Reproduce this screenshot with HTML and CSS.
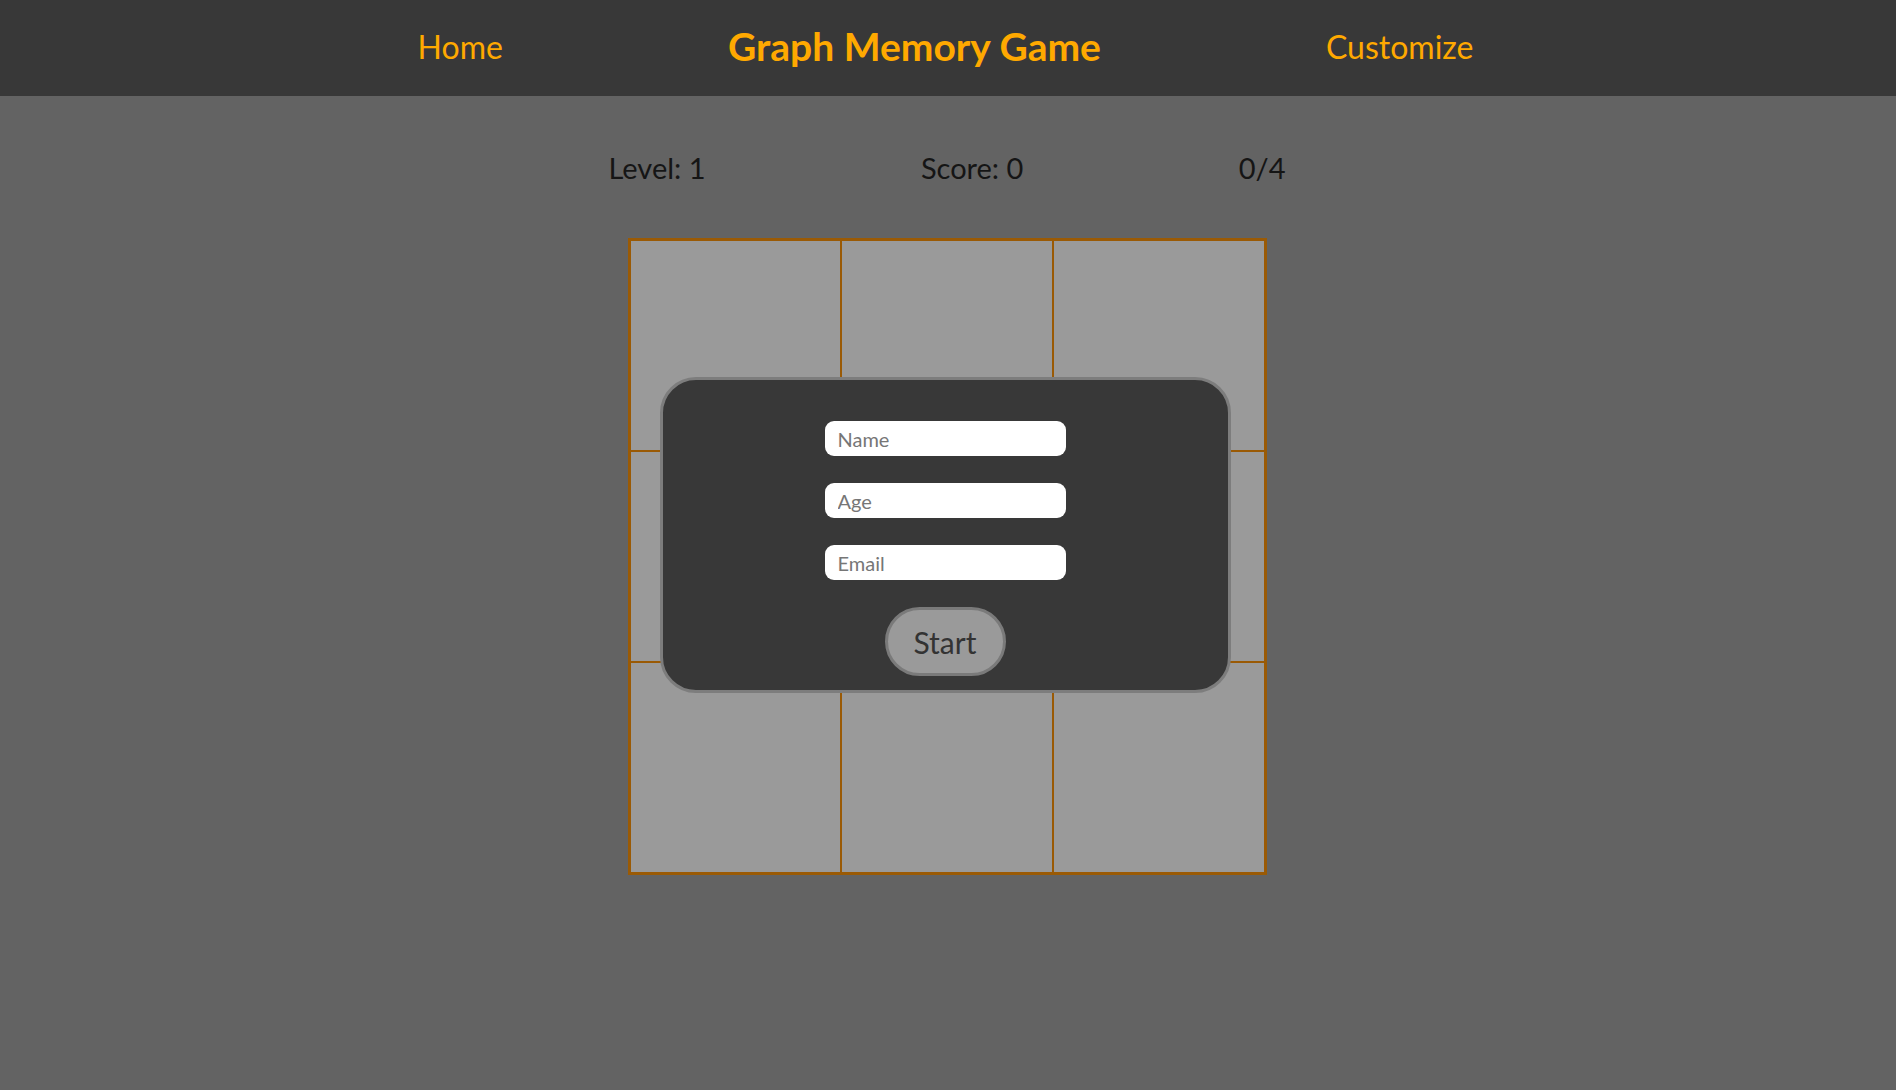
FILE: index.html
```html
<!DOCTYPE html>
<html lang="en">
<head>
<meta charset="utf-8">
<title>Graph Memory Game</title>
<link rel="stylesheet" href="styles.css">
</head>
<body>
<header class="topbar">
  <a class="nav-link" href="#">Home</a>
  <h1 class="title">Graph Memory Game</h1>
  <a class="nav-link" href="#">Customize</a>
</header>
<main class="main">
  <div class="stats">
    <span class="stat">Level: 1</span>
    <span class="stat">Score: 0</span>
    <span class="stat">0/4</span>
  </div>
  <div class="board-wrap">
    <div class="board">
      <div class="cell"></div><div class="cell"></div><div class="cell"></div>
      <div class="cell"></div><div class="cell"></div><div class="cell"></div>
      <div class="cell"></div><div class="cell"></div><div class="cell"></div>
    </div>
    <form class="modal">
      <input class="field" type="text" placeholder="Name">
      <input class="field" type="text" placeholder="Age">
      <input class="field" type="text" placeholder="Email">
      <button class="start" type="button">Start</button>
    </form>
  </div>
</main>
</body>
</html>
```
FILE: styles.css
```css
* { box-sizing: border-box; }
html, body { margin: 0; padding: 0; }
body {
  background: #636363;
  font-family: Lato, "Open Sans", sans-serif;
  height: 1087px;
  overflow: hidden;
}
.topbar {
  height: 96px;
  background: #383838;
  display: flex;
  justify-content: center;
  align-items: center;
  gap: 225px;
  padding-bottom: 4px;
  padding-right: 5px;
}
.nav-link {
  color: #ffa900;
  text-decoration: none;
  font-size: 32px;
}
.title {
  margin: 0;
  color: #ffa900;
  font-size: 39px;
  font-weight: 700;
}
.main {
  display: flex;
  flex-direction: column;
  align-items: center;
  padding-top: 52px;
}
.stats {
  width: 677px;
  display: flex;
  justify-content: space-between;
  color: #151515;
  font-size: 29px;
  line-height: 40px;
  margin-right: 2px;
}
.board-wrap {
  position: relative;
  margin-top: 50px;
  margin-right: 2px;
}
.board {
  width: 639px;
  height: 637px;
  border: 2px solid #9a5a05;
  display: grid;
  grid-template-columns: repeat(3, 1fr);
  grid-template-rows: repeat(3, 1fr);
  background: #9a9a9a;
}
.cell {
  border: 1px solid #9a5a05;
  background: #9a9a9a;
}
.modal {
  position: absolute;
  left: 32px;
  top: 139px;
  width: 571px;
  height: 316px;
  background: #383838;
  border: 3px solid #7d7d7d;
  border-radius: 36px;
  display: flex;
  flex-direction: column;
  align-items: center;
  padding-top: 41px;
  gap: 27px;
  margin: 0;
}
.field {
  width: 241px;
  height: 35px;
  border: none;
  border-radius: 9px;
  background: #fff;
  padding: 0 13px;
  font-family: Lato, "Open Sans", sans-serif;
  font-size: 20px;
  color: #333;
  outline: none;
}
.field::placeholder { color: #767676; }
.start {
  width: 121px;
  height: 69px;
  border: 3px solid #7a7a7a;
  border-radius: 35px;
  background: #9a9a9a;
  color: #333;
  font-family: Lato, "Open Sans", sans-serif;
  font-size: 30px;
  padding: 0;
}
```
